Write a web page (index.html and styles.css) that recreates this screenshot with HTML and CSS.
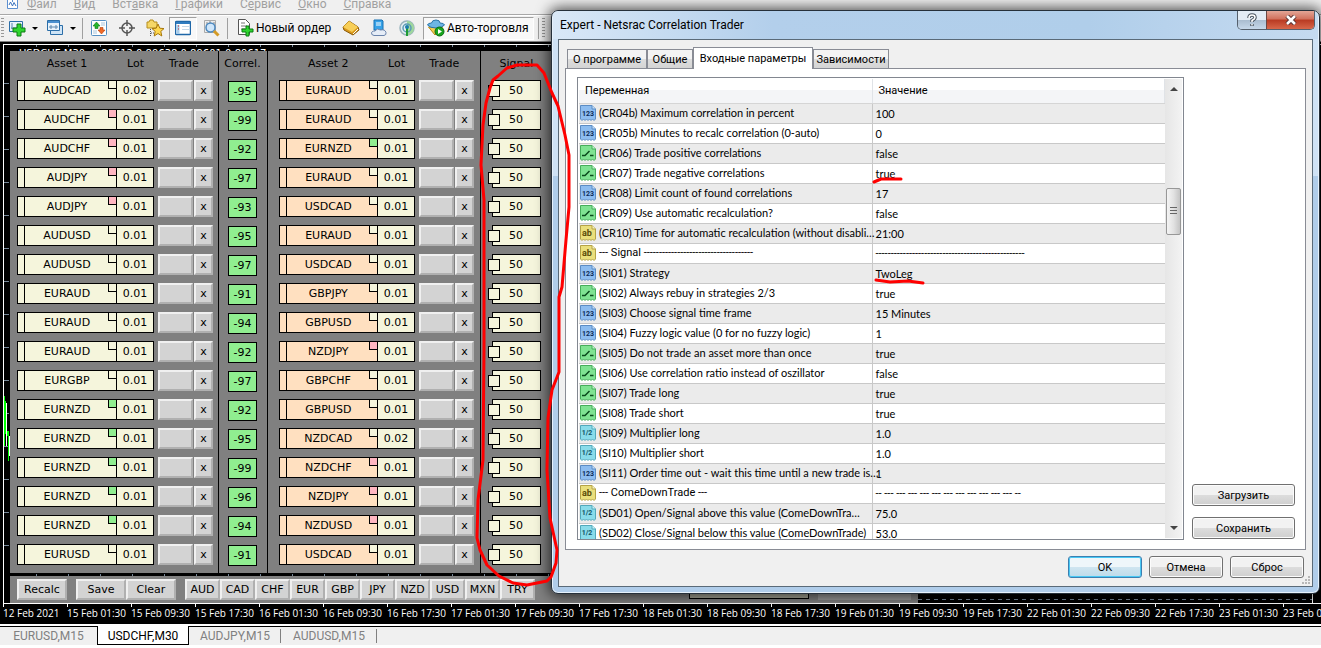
FILE: index.html
```html
<!DOCTYPE html>
<html lang="ru">
<head>
    <meta charset="UTF-8">
    <title>Netsrac Correlation Trader</title>
    <link rel="stylesheet" href="styles.css">
</head>
<body>
    <!-- parameter type icons -->
    <svg class="defs">
        <symbol id="p-int" viewBox="0 0 16 16">
            <path d="M.5.5H12L15.500 4V14L14 15.500 12.500 14 11 15.500 9.500 14 8 15.500 6.500 14 5 15.500 3.500 14 2 15.500.5 14Z" fill="#8dbdf0" stroke="#5b8cc4"/>
            <path d="M12 .5V4H15.500" fill="#c9e0fa" stroke="#5b8cc4"/>
            <text x="8" y="11" text-anchor="middle" font-size="7" font-weight="bold" fill="#0c2c58">123</text>
        </symbol>
        <symbol id="p-bool" viewBox="0 0 16 16">
            <path d="M.5.5H12L15.500 4V14L14 15.500 12.500 14 11 15.500 9.500 14 8 15.500 6.500 14 5 15.500 3.500 14 2 15.500.5 14Z" fill="#7fe392" stroke="#46ad5c"/>
            <path d="M12 .5V4H15.500" fill="#c5f6cd" stroke="#46ad5c"/>
            <path d="M2 10.500H5L9.500 6M10 10.500H13.500" fill="none" stroke="#0a4a1c" stroke-width="1.500"/>
        </symbol>
        <symbol id="p-str" viewBox="0 0 16 16">
            <path d="M.5.5H12L15.500 4V14L14 15.500 12.500 14 11 15.500 9.500 14 8 15.500 6.500 14 5 15.500 3.500 14 2 15.500.5 14Z" fill="#eadf7c" stroke="#b5a348"/>
            <path d="M12 .5V4H15.500" fill="#faf5c0" stroke="#b5a348"/>
            <text x="7" y="11" text-anchor="middle" font-size="9" font-weight="bold" fill="#5b4c08">ab</text>
        </symbol>
        <symbol id="p-dbl" viewBox="0 0 16 16">
            <path d="M.5.5H12L15.500 4V14L14 15.500 12.500 14 11 15.500 9.500 14 8 15.500 6.500 14 5 15.500 3.500 14 2 15.500.5 14Z" fill="#8adcea" stroke="#52a9bb"/>
            <path d="M12 .5V4H15.500" fill="#cdf4fa" stroke="#52a9bb"/>
            <text x="7" y="10" text-anchor="middle" font-size="7" font-weight="bold" fill="#125566">1/2</text>
        </symbol>
    </svg>

    <nav class="menu">
        <svg class="menu-icon" width="16" height="16" viewBox="0 0 16 16"><path d="M1.500 1.500H9.500V8M4.500 5.500H14.500V14.500H4.500Z" fill="#fff" stroke="#5c8fd0"/><path d="M6 11 7.500 8 9.500 12 11 8.500 13 12" fill="none" stroke="#3a72be"/></svg>
        <a href="#"><u>Ф</u>айл</a>
        <a href="#"><u>В</u>ид</a>
        <a href="#">Вст<u>а</u>вка</a>
        <a href="#"><u>Г</u>рафики</a>
        <a href="#">С<u>е</u>рвис</a>
        <a href="#"><u>О</u>кно</a>
        <a href="#"><u>С</u>правка</a>
    </nav>

    <div class="toolbar">
        <span class="grip"></span>
        <button class="tool drop" aria-label="Новый график">
            <svg width="18" height="18" viewBox="0 0 18 18"><path d="M1.500 2.500H14.500V12.500H1.500Z" fill="#e8f3fc" stroke="#2c6ea8"/><path d="M4 4V10M3 9H12" stroke="#5a86ad"/><path d="M9 5H13V9H17V13H13V17H9V13H5V9H9Z" fill="#2fd52f" stroke="#0a7a12"/></svg>
            <i></i>
        </button>
        <button class="tool drop" aria-label="Профили">
            <svg width="18" height="18" viewBox="0 0 18 18"><path d="M4.500 6.500H16.500V15.500H4.500Z" fill="#cfe4f6" stroke="#2c6ea8"/><path d="M1.500 1.500H13.500V11.500H1.500Z" fill="#e8f3fc" stroke="#2c6ea8"/><path d="M2 3H13" stroke="#4a90d0" stroke-width="2"/><path d="M3 8H12M5 6V10M10 6V10" stroke="#5a86ad"/></svg>
            <i></i>
        </button>
        <span class="sep"></span>
        <button class="tool" aria-label="Обзор рынка"><svg width="16" height="16" viewBox="0 0 16 16"><rect x=".5" y=".5" width="15" height="15" rx="1" fill="#fff" stroke="#5590c4"/><path d="M10 3H14M10 5H14M2 11H6M2 13H6" stroke="#a9c5dc"/><path d="M5.500 2 9 6H7V8.500H4V6H2Z" fill="#25b52c" stroke="#0d7a16" stroke-width=".6"/><path d="M10.500 14 7 10H9V7.500H12V10H14Z" fill="#f06a28" stroke="#b33c08" stroke-width=".6"/></svg></button>
        <button class="tool" aria-label="Окно данных"><svg width="16" height="16" viewBox="0 0 16 16" fill="none" stroke="#555" stroke-width="1.500"><circle cx="8" cy="8" r="5"/><path d="M8 0V6M8 10V16M0 8H6M10 8H16"/></svg></button>
        <button class="tool" aria-label="Навигатор"><svg width="18" height="18" viewBox="0 0 18 18"><path d="M1 9V3H3L4 1H7L8 3H11V9Z" fill="#f6d766" stroke="#b58d1c"/><path d="M4.500 10V17M5 14H8" stroke="#555" stroke-dasharray="1 1"/><path d="M12 5 13.800 9.200 18 9.600 14.800 12.400 15.800 17 12 14.500 8.200 17 9.200 12.400 6 9.600 10.200 9.200Z" fill="#ffd84f" stroke="#a8780a"/></svg></button>
        <button class="tool pressed" aria-label="Терминал"><svg width="16" height="16" viewBox="0 0 16 16"><rect x=".5" y="1.500" width="15" height="13" rx="1" fill="#fff" stroke="#1f67a8" stroke-width="1.500"/><path d="M1 3H15" stroke="#2f7cc0" stroke-width="2"/><path d="M3 5V14" stroke="#a9cdea" stroke-width="3"/><path d="M3 6H4M3 9H4" stroke="#c22"/><path d="M7 6.500H14M7 9.500H14" stroke="#c5d8e8"/></svg></button>
        <button class="tool" aria-label="Тестер"><svg width="18" height="18" viewBox="0 0 18 18"><path d="M2.500 1.500H13.500V13.500H2.500Z" fill="#eee" stroke="#aaa"/><path d="M5 3V12M8 2V6M12 3V6" stroke="#888"/><circle cx="8.500" cy="8.500" r="4.500" fill="#cfe6fa" stroke="#4b88bf" stroke-width="1.500"/><path d="M12 12 16.500 16.500" stroke="#d39a25" stroke-width="3"/></svg></button>
        <span class="sep"></span>
        <button class="tool labelled"><svg width="18" height="18" viewBox="0 0 18 18"><path d="M2.500.5H9.500L13.500 4.500V15.500H2.500Z" fill="#fff" stroke="#555"/><path d="M5 4H9M5 7H11M5 10H9" stroke="#777"/><path d="M10 7H13V10H17V13H13V17H10V13H6V10H10Z" fill="#2fd52f" stroke="#0a7a12"/></svg>Новый ордер</button>
        <button class="tool" aria-label="MetaEditor"><svg width="18" height="18" viewBox="0 0 18 18"><path d="M1 8 7 2 16 8 17 11 11 16 2 11Z" fill="#d9991c" stroke="#8a5a08"/><path d="M1 8 7 2 16 8 10 13Z" fill="#f8cf58"/><path d="M11 15 16 10" stroke="#fff"/></svg></button>
        <button class="tool" aria-label="Хостинг"><svg width="18" height="18" viewBox="0 0 18 18"><path d="M4 1H12L13 2V11H4Z" fill="#36a2e8" stroke="#1872b4"/><path d="M6 4H11M6 6H11" stroke="#fff"/><path d="M4 16.500Q1 16 1.500 13.500 3 11.500 5 12 7 8.500 10.500 11 15 10 16 13.500 16.500 16 14 16.500Z" fill="#e6edf7" stroke="#6a83ab"/></svg></button>
        <button class="tool" aria-label="Сигналы"><svg width="18" height="18" viewBox="0 0 18 18"><circle cx="9" cy="9" r="7" fill="#e3eef2" stroke="#9ab4bd" stroke-width="1.500"/><path d="M9 2A7 7 0 0 1 16 9 7 7 0 0 1 9 16Z" fill="#9fd89c"/><circle cx="9" cy="9" r="4" fill="none" stroke="#5a9bb5" stroke-width="1.500"/><path d="M9 8V17" stroke="#1f9a34" stroke-width="2"/><circle cx="9" cy="8" r="2" fill="#1c7cae"/></svg></button>
        <button class="tool labelled pressed auto"><svg width="18" height="18" viewBox="0 0 18 18"><path d="M1.500 8 8 16 15.500 8Z" fill="#f4cd50" stroke="#b58a18"/><path d="M.5 6Q1 4 4.500 4 5 1 9 1T13 4Q17 4 17.500 6 15 9 9 9T.5 6Z" fill="#6db6e4" stroke="#2a74a8"/><circle cx="12.500" cy="12.500" r="4.500" fill="#18a51f" stroke="#0b6d12"/><path d="M11 10 15 12.500 11 15Z" fill="#fff"/></svg>Авто-торговля</button>
        <span class="sep"></span>
        <span class="grip"></span>
    </div>

    <main class="chart">
        <div class="chart-top"><p>USDCHF,M30&nbsp; 0.89612 0.89638 0.89601 0.89617</p></div>
        <svg class="candles" width="8" height="70" viewBox="0 0 8 70" fill="none" stroke="#0f0" stroke-width="1"><path d="M1.500 0V50M2.500 5V38M5.500 35V65M4.500 35V40"/><path d="M3.500 7V50M6.500 40V60" stroke="#fff"/></svg>
        <div class="panel">
            <table class="pairs">
                <thead>
                    <tr><th class="c-asset">Asset 1</th><th class="c-lot">Lot</th><th class="c-trade">Trade</th><th class="c-cor">Correl.</th><th class="c-asset2">Asset 2</th><th class="c-lot">Lot</th><th class="c-trade2">Trade</th><th class="c-sig">Signal</th></tr>
                </thead>
                <tbody id="pairs"></tbody>
            </table>
        </div>
        <div class="scale-gap"></div>
        <div class="bar-row">
            <div class="panel-bar">
                <button class="wide">Recalc</button>
                <span class="group"><button class="wide">Save</button><button class="wide">Clear</button></span>
                <span class="group" id="currencies"></span>
                <span class="behind"></span>
                <span class="behind-end"></span>
            </div>
            <div class="grid-rest"></div>
        </div>
        <div class="time-axis" id="times"></div>
    </main>

    <footer class="chart-tabs">
        <a href="#">EURUSD,M15</a>
        <a href="#" class="active">USDCHF,M30</a>
        <a href="#">AUDJPY,M15</a>
        <a href="#">AUDUSD,M15</a>
    </footer>

    <section class="dialog" role="dialog" aria-labelledby="dlg-title">
        <header class="titlebar">
            <h1 id="dlg-title">Expert - Netsrac Correlation Trader</h1>
            <div class="win-buttons">
                <button class="help" aria-label="Справка"><svg width="10" height="14" viewBox="0 0 10 14"><path d="M2 5Q2 2 5 2T8 4.500Q8 6 5 7.500V9M5 11V13" fill="none" stroke="#4a5560" stroke-width="3.500"/><path d="M2 5Q2 2 5 2T8 4.500Q8 6 5 7.500V9M5 11V12.500" fill="none" stroke="#fff" stroke-width="1.500"/></svg></button><button class="close" aria-label="Закрыть"><svg width="12" height="10" viewBox="0 0 12 10"><path d="M2 1 10 9M10 1 2 9" stroke="#54302f" stroke-width="4.500"/><path d="M2 1 10 9M10 1 2 9" stroke="#fff" stroke-width="2.500"/></svg></button>
            </div>
        </header>
        <div class="client">
            <div class="tabs" role="tablist">
                <button role="tab">О программе</button><button role="tab">Общие</button><button role="tab" class="active">Входные параметры</button><button role="tab">Зависимости</button>
            </div>
            <div class="pane">
                <div class="list">
                    <table class="params">
                        <thead><tr><th class="c-name">Переменная</th><th>Значение</th></tr></thead>
                        <tbody id="params"></tbody>
                    </table>
                    <div class="scrollbar"><span class="up"></span><span class="thumb"></span><span class="down"></span></div>
                </div>
                <div class="side">
                    <button class="btn">Загрузить</button>
                    <button class="btn">Сохранить</button>
                </div>
            </div>
            <div class="actions">
                <button class="btn ok">OK</button>
                <button class="btn">Отмена</button>
                <button class="btn">Сброс</button>
            </div>
            <svg class="resize" width="8" height="8" fill="#b8b8b8"><path d="M6 0H8V2H6ZM3 3H5V5H3ZM6 3H8V5H6ZM0 6H2V8H0ZM3 6H5V8H3ZM6 6H8V8H6Z"/></svg>
        </div>
    </section>

    <!-- hand-drawn marks -->
    <svg class="marks" width="1000" height="640" viewBox="0 0 1000 640">
        <path d="M498 76 507 68 517 65 537 65 544 73 552 93 558 106 565 135 569 155 569 207 566 240 562 287 559 297V372L552 390 548 418 547 470 550 518 557 550 556 563 551 577 547 581 527 585 513 583 499 576 487 565 480 550 477 538 478 500 483 460 484 350V200L481 165 483 125 486 103 490 88 493 80Z"/>
        <path d="M874 182 881 179H901"/>
        <path d="M876 280 890 282 908 281 923 283"/>
    </svg>

    <script>
        // asset 1, marker, lot, correlation, asset 2, marker, lot  (p = pink, g = green)
        const pairs = [
            ['AUDCAD', '', '0.02', -95, 'EURAUD', '', '0.01'],
            ['AUDCHF', 'p', '0.01', -99, 'EURAUD', '', '0.01'],
            ['AUDCHF', 'p', '0.01', -92, 'EURNZD', 'g', '0.01'],
            ['AUDJPY', 'p', '0.01', -97, 'EURAUD', '', '0.01'],
            ['AUDJPY', 'p', '0.01', -93, 'USDCAD', '', '0.01'],
            ['AUDUSD', '', '0.01', -95, 'EURAUD', '', '0.01'],
            ['AUDUSD', '', '0.01', -97, 'USDCAD', '', '0.01'],
            ['EURAUD', '', '0.01', -91, 'GBPJPY', '', '0.01'],
            ['EURAUD', '', '0.01', -94, 'GBPUSD', '', '0.01'],
            ['EURAUD', '', '0.01', -92, 'NZDJPY', 'p', '0.01'],
            ['EURGBP', '', '0.01', -97, 'GBPCHF', '', '0.01'],
            ['EURNZD', 'g', '0.01', -92, 'GBPUSD', '', '0.01'],
            ['EURNZD', 'g', '0.01', -95, 'NZDCAD', '', '0.02'],
            ['EURNZD', 'g', '0.01', -99, 'NZDCHF', 'p', '0.01'],
            ['EURNZD', 'g', '0.01', -96, 'NZDJPY', 'p', '0.01'],
            ['EURNZD', 'g', '0.01', -94, 'NZDUSD', 'p', '0.01'],
            ['EURUSD', '', '0.01', -91, 'USDCAD', '', '0.01']
        ];

        const params = [
            ['int', '(CR04b) Maximum correlation in percent', '100'],
            ['int', '(CR05b) Minutes to recalc correlation (0-auto)', '0'],
            ['bool', '(CR06) Trade positive correlations', 'false'],
            ['bool', '(CR07) Trade negative correlations', 'true'],
            ['int', '(CR08) Limit count of found correlations', '17'],
            ['bool', '(CR09) Use automatic recalculation?', 'false'],
            ['str', '(CR10) Time for automatic recalculation (without disabli…', '21:00'],
            ['str', '--- Signal ------------------------------------', '-------------------------------------------------'],
            ['int', '(SI01) Strategy', 'TwoLeg'],
            ['bool', '(SI02) Always rebuy in strategies 2/3', 'true'],
            ['int', '(SI03) Choose signal time frame', '15 Minutes'],
            ['int', '(SI04) Fuzzy logic value (0 for no fuzzy logic)', '1'],
            ['bool', '(SI05) Do not trade an asset more than once', 'true'],
            ['bool', '(SI06) Use correlation ratio instead of oszillator', 'false'],
            ['bool', '(SI07) Trade long', 'true'],
            ['bool', '(SI08) Trade short', 'true'],
            ['dbl', '(SI09) Multiplier long', '1.0'],
            ['dbl', '(SI10) Multiplier short', '1.0'],
            ['int', '(SI11) Order time out - wait this time until a new trade is…', '1'],
            ['str', '--- ComeDownTrade ---', '-- --- --- --- --- --- --- --- --- --- --- --- --'],
            ['dbl', '(SD01) Open/Signal above this value (ComeDownTra…', '75.0'],
            ['dbl', '(SD02) Close/Signal below this value (ComeDownTrade)', '53.0']
        ];

        const times = ['12 Feb 2021', '15 Feb 01:30', '15 Feb 09:30', '15 Feb 17:30', '16 Feb 01:30', '16 Feb 09:30',
            '16 Feb 17:30', '17 Feb 01:30', '17 Feb 09:30', '17 Feb 17:30', '18 Feb 01:30', '18 Feb 09:30', '18 Feb 17:30',
            '19 Feb 01:30', '19 Feb 09:30', '19 Feb 17:30', '22 Feb 01:30', '22 Feb 09:30', '22 Feb 17:30', '23 Feb 01:30', '23 Feb 09:30'];

        const currencies = ['AUD', 'CAD', 'CHF', 'EUR', 'GBP', 'JPY', 'NZD', 'USD', 'MXN', 'TRY'];

        const trade = '<div class="trade"><button class="blank" aria-label="Trade"></button><button>x</button></div>';

        document.getElementById('pairs').innerHTML = pairs.map(([a1, m1, l1, cor, a2, m2, l2]) => `
            <tr>
                <td><div class="asset">${a1}<i class="${m1}"></i></div></td>
                <td><div class="lot">${l1}</div></td>
                <td>${trade}</td>
                <td class="c-cor"><div class="cor">${cor}</div></td>
                <td class="c-asset2"><div class="asset second">${a2}<i class="${m2}"></i></div></td>
                <td><div class="lot">${l2}</div></td>
                <td>${trade}</td>
                <td class="c-sig"><div class="signal">50</div></td>
            </tr>`).join('');

        document.getElementById('params').innerHTML = params.map(([type, name, value]) => `
            <tr class="${name.startsWith('---') ? 'divider' : ''}">
                <td><div class="name"><svg width="16" height="16"><use href="#p-${type}"/></svg>${name}</div></td>
                <td class="value">${value}</td>
            </tr>`).join('');

        document.getElementById('times').innerHTML = times.map(t => `<span>${t}</span>`).join('');
        document.getElementById('currencies').innerHTML = currencies.map(c => `<button>${c}</button>`).join('');
    </script>
</body>
</html>
```

FILE: styles.css
```css
* {
    box-sizing: border-box;
}
body {
    margin: 0;
    min-height: 100vh;
    display: flex;
    flex-direction: column;
    position: relative;
    overflow: hidden;
    background: #f0f0f0;
    font-family: Roboto, "Liberation Sans", sans-serif;
    font-size: 11px;
}
button {
    font: inherit;
    color: inherit;
    padding: 0;
    border: 0;
    background: none;
}
table {
    border-collapse: collapse;
    table-layout: fixed;
}
th, td {
    padding: 0;
    font-weight: normal;
}
.defs {
    display: none;
}

/* menu and toolbar */
.menu {
    height: 14px;
    display: flex;
    align-items: flex-end;
    gap: 17px;
    padding-left: 3px;
    font-size: 12px;
    line-height: 20px;
}
.menu-icon {
    flex: none;
    width: 16px;
    margin-right: -9px;
    margin-bottom: 4px;
}
.menu a {
    color: #a0a0a0;
    text-decoration: none;
}
.toolbar {
    height: 27px;
    display: flex;
    align-items: center;
    border-top: 1px solid #a8a8a8;
    box-shadow: inset 0 1px #fff;
    background: #f0f0f0;
    font-size: 12px;
    line-height: 20px;
    white-space: nowrap;
}
.grip {
    width: 3px;
    height: 20px;
    margin-left: 1px;
    background: repeating-linear-gradient(#999 0 1px, transparent 1px 3px);
}
.sep {
    width: 1px;
    height: 21px;
    margin: 0 2px;
    background: #a0a0a0;
}
.tool {
    width: 28px;
    height: 23px;
    flex: none;
    display: flex;
    align-items: center;
    justify-content: center;
}
.drop {
    width: 38px;
    gap: 6px;
}
.drop i {
    border: 3px solid transparent;
    border-top-color: #000;
    border-bottom: 0;
}
.labelled {
    width: auto;
    min-width: 107px;
    justify-content: flex-start;
    gap: 2px;
    padding: 0 2px 0 6px;
}
.pressed {
    border: 1px solid;
    border-color: #a0a0a0 #fff #fff #a0a0a0;
    background: #f8f8f8;
}
.auto {
    width: 111px;
    margin: 0 2px;
    padding: 0 3px;
}

/* chart */
.chart {
    flex: 1;
    display: flex;
    flex-direction: column;
    position: relative;
    background: #000;
    border-top: 1px solid #808080;
    font-family: "DejaVu Sans", Verdana, sans-serif;
}
.chart-top {
    height: 7px;
    margin: 2px 0 0 3px;
    border-top: 1px solid #fff;
    border-left: 1px solid #fff;
    background: repeating-linear-gradient(90deg, transparent 0 31px, #778899 31px 32px) 1px 0 / 100% 2px no-repeat;
    overflow: hidden;
}
.chart-top p {
    margin: 3px 0 0 15px;
    font-size: 10px;
    line-height: 12px;
    color: #fff;
}
.candles {
    position: absolute;
    left: 3px;
    top: 354px;
}
.panel {
    margin-left: 3px;
    padding-left: 6px;
    border-left: 1px solid #fff;
    background: repeating-linear-gradient(#000 0 32px, #778899 32px 33px) 0 0 / 5px 100% no-repeat;
}
.pairs {
    width: 908px;
    background: #808080;
}
.pairs th {
    height: 29px;
    font-size: 11px;
    padding-bottom: 5px;
    text-align: center;
}
.pairs td {
    height: 29px;
    vertical-align: top;
}
.c-asset { width: 107px; }
.pairs .c-asset,
.pairs td:first-child {
    padding-left: 7px;
}
.c-lot { width: 41px; }
.pairs .c-lot { padding-right: 4px; }
.c-trade { width: 60px; }
.pairs .c-trade { padding-right: 8px; }
.c-cor {
    width: 49px;
    border: 1px solid #000;
    border-width: 0 1px;
}
.c-asset2 { width: 111px; }
.pairs .c-asset2 { padding-left: 11px; }
.c-trade2 { width: 61px; }
.pairs .c-trade2 { padding-right: 10px; }
.pairs .c-sig {
    border-left: 1px solid #000;
    padding-left: 11px;
}
.pairs th.c-sig {
    text-align: left;
    padding-left: 19px;
}
.asset, .lot, .cor, .signal {
    height: 21px;
    border: 1px solid #000;
    background: #f5f5dc;
    line-height: 20px;
    text-align: center;
}
.asset {
    position: relative;
    background: linear-gradient(90deg, transparent 6px, #000 6px 7px, transparent 7px) #f5f5dc;
}
.asset.second {
    background-color: #ffe0c0;
}
.asset i {
    position: absolute;
    right: 0;
    top: 0;
    width: 8px;
    height: 8px;
    border: 1px solid #000;
    border-width: 0 0 1px 1px;
    background: #f5f5dc;
}
.asset .p { background: #ffb6c1; }
.asset .g { background: #90ee90; }
.lot {
    width: 37px;
    border-left: 0;
}
.trade {
    display: flex;
    gap: 1px;
}
.trade button, .panel-bar button {
    width: 19px;
    height: 21px;
    border: 2px solid;
    border-color: #f0f0f0 #b0b0b0 #b0b0b0 #f0f0f0;
    background: #d3d3d3;
}
.trade .blank {
    width: 35px;
}
.cor {
    width: 29px;
    margin: 1px auto 0;
    background: #90ee90;
}
.signal {
    position: relative;
    width: 49px;
}
.signal::before {
    content: "";
    position: absolute;
    left: -5px;
    top: 4px;
    width: 10px;
    height: 10px;
    border: 1px solid #000;
    background: #f5f5dc;
}
.scale-gap {
    height: 3px;
    margin-left: 3px;
    border-left: 1px solid #fff;
    background: repeating-linear-gradient(90deg, transparent 0 31px, #778899 31px 32px) 1px 1px / 100% 2px no-repeat;
}
.bar-row {
    display: flex;
    margin-left: 3px;
    padding-left: 6px;
    border-left: 1px solid #fff;
}
.panel-bar {
    height: 27px;
    width: 908px;
    padding: 3px 7px 0;
    display: flex;
    gap: 9px;
    background: #808080;
}
.panel-bar button {
    width: 35px;
}
.panel-bar .wide {
    width: 50px;
}
.group {
    display: flex;
}
.behind {
    width: 120px;
    height: 20px;
    margin-left: 145px;
    border: 1px solid #000;
    background: #a8a898;
}
.behind-end {
    flex: 1;
    height: 21px;
    background: #9a9a9a;
}
.grid-rest {
    flex: 1;
    margin-right: 8px;
    border-right: 1px solid #fff;
    background: repeating-linear-gradient(90deg, #778899 0 4px, transparent 4px 8px) 0 23px / 100% 1px no-repeat;
}
.time-axis {
    height: 21px;
    margin-left: 3px;
    display: flex;
    border-top: 1px solid #fff;
    overflow: hidden;
    color: #fff;
    font: 10px/18px "Open Sans", sans-serif;
}
.time-axis span {
    flex: none;
    width: 64px;
    white-space: nowrap;
    background: linear-gradient(#fff, #fff) 0 0 / 1px 3px no-repeat;
}

/* chart tabs */
.chart-tabs {
    height: 24px;
    display: flex;
    border-top: 2px solid #fff;
    border-bottom: 3px solid #fff;
    box-shadow: inset 0 1px #000;
    font-size: 12px;
    line-height: 20px;
}
.chart-tabs a {
    width: 92px;
    text-align: center;
    color: #808080;
    text-decoration: none;
}
.chart-tabs a:first-child {
    width: 97px;
}
.chart-tabs a:last-child {
    width: 96px;
}
.chart-tabs a + a:not(.active) {
    background: linear-gradient(#808080, #808080) right center / 1px 14px no-repeat;
}
.chart-tabs .active {
    border: 1px solid #000;
    border-top: 0;
    background: #fff;
    color: #000;
}

/* expert dialog */
.dialog {
    position: absolute;
    left: 551px;
    right: 1px;
    top: 10px;
    padding: 0 6px 6px;
    border: 1px solid #26303a;
    border-radius: 7px;
    background: linear-gradient(#cfe2f5 0 165px, #b0cdea 165px);
    box-shadow: inset 0 0 0 1px #e6f1fb, 0 0 14px 2px rgba(0, 0, 0, .7);
}
.titlebar {
    height: 28px;
    margin: 0 -5px;
    padding: 0 3px 0 2px;
    display: flex;
    justify-content: space-between;
    border-radius: 6px 6px 0 0;
    background: linear-gradient(90deg, #d9e8f7, #b3cfeb 220px, #b0ceea 70%, #c5daf0);
}
.titlebar h1 {
    margin: 0;
    font-size: 12px;
    font-weight: normal;
    line-height: 28px;
    padding-left: 5px;
}
.win-buttons {
    height: 19px;
    display: flex;
    border: 1px solid #55606c;
    border-top: 0;
    border-radius: 0 0 5px 5px;
    overflow: hidden;
}
.win-buttons button {
    display: flex;
    align-items: center;
    justify-content: center;
}
.help {
    width: 28px;
    background: linear-gradient(#e3ecf5 50%, #a9bccf 50%, #c6d8ea);
}
.win-buttons .close {
    width: 48px;
    border-left: 1px solid #6b4743;
    background: linear-gradient(#e3a596, #d0705c 45%, #b93a22 50%, #d8674a);
}
.client {
    position: relative;
    border: 1px solid #5a6a78;
    background: #f0f0f0;
    padding: 7px 6px 8px;
}
.tabs {
    height: 21px;
    padding-left: 2px;
    display: flex;
    align-items: flex-end;
}
.tabs button {
    width: 76px;
    height: 19px;
    border: 1px solid #898c95;
    border-bottom: 0;
    background: linear-gradient(#f3f3f3 50%, #dedede 50%, #d4d4d4);
    white-space: nowrap;
}
.tabs button:first-child { width: 80px; }
.tabs button:nth-child(2) { width: 46px; }
.tabs .active {
    position: relative;
    width: 120px;
    height: 22px;
    margin-bottom: -1px;
    background: #fff;
}
.pane {
    display: flex;
    gap: 8px;
    padding: 8px 10px 9px 11px;
    border: 1px solid #898c95;
    background: #fff;
}
.list {
    flex: 1;
    height: 463px;
    display: flex;
    border: 1px solid #828790;
    padding: 1px;
    overflow: hidden;
}
.params {
    flex: 1;
    width: 100%;
    height: 465px;
}
.params th {
    height: 24px;
    padding-left: 6px;
    text-align: left;
    border-right: 1px solid #e0e3e7;
    border-bottom: 1px solid #d5d5d5;
    background: linear-gradient(#fff 45%, #f4f5f7 45%);
}
.params .c-name {
    width: 293px;
}
.params td {
    height: 20px;
    border-right: 1px solid #c8c8c8;
    border-bottom: 1px solid #c8c8c8;
    font-family: Lato, sans-serif;
    white-space: nowrap;
}
.params .divider td {
    font-family: Roboto, sans-serif;
}
.params tbody tr:nth-child(odd) {
    background: #ebebeb;
}
.name {
    display: flex;
    align-items: center;
    gap: 3px;
    padding-left: 1px;
    line-height: 16px;
}
.name svg {
    flex: none;
    font-family: Roboto, sans-serif;
}
.params .value {
    padding-left: 3px;
    border-right: 0;
}
.scrollbar {
    flex: none;
    width: 17px;
    display: flex;
    flex-direction: column;
    align-items: center;
    background: linear-gradient(90deg, #e6e6e6, #f3f3f3);
}
.up, .down {
    margin: 8px 0;
    border: 4px solid transparent;
    border-top: 0;
    border-bottom-color: #444;
}
.down {
    margin-top: auto;
    border-top: 4px solid #444;
    border-bottom: 0;
}
.thumb {
    width: 15px;
    height: 47px;
    margin-top: 89px;
    border: 1px solid #979797;
    border-radius: 2px;
    background:
        repeating-linear-gradient(#666 0 1px, transparent 1px 3px) center / 7px 9px no-repeat,
        linear-gradient(90deg, #f4f4f4, #e2e2e2 50%, #c4c4c4);
}
.side {
    display: flex;
    flex-direction: column;
    justify-content: flex-end;
    gap: 11px;
    padding-bottom: 1px;
}
.btn {
    width: 74px;
    height: 22px;
    border: 1px solid #707070;
    border-radius: 3px;
    background: linear-gradient(#f2f2f2 50%, #dddddd 50%, #cfcfcf);
    box-shadow: inset 0 0 0 1px #fcfcfc;
}
.side .btn {
    width: 103px;
}
.btn.ok {
    border-color: #3c7fb1;
    background: linear-gradient(#eef6fa 50%, #cfe5f0 50%, #bddbea);
    box-shadow: inset 0 0 0 1px #48c8f4;
}
.actions {
    display: flex;
    justify-content: flex-end;
    gap: 7px;
    padding: 6px 2px 0 0;
}
.resize {
    position: absolute;
    right: 2px;
    bottom: 2px;
}

.marks {
    position: absolute;
    left: 0;
    top: 0;
    pointer-events: none;
    fill: none;
    stroke: #f00;
    stroke-width: 3;
    stroke-linejoin: round;
    stroke-linecap: round;
}
```
